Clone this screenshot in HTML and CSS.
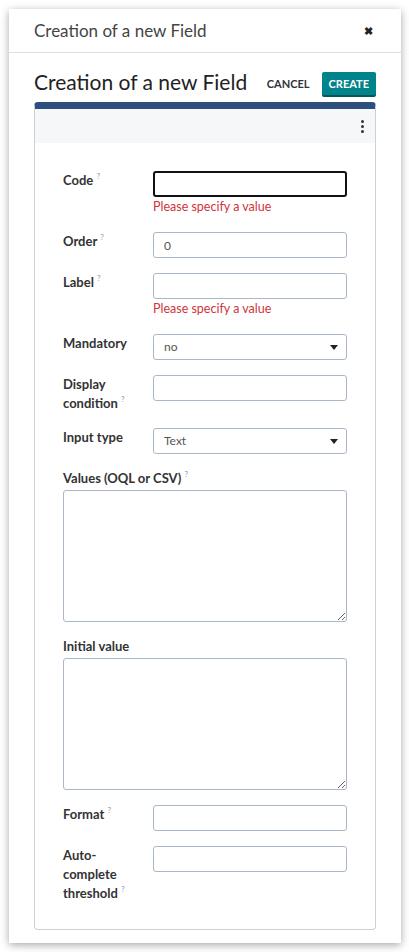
FILE: index.html
```html
<!DOCTYPE html>
<html lang="en">
<head>
  <meta charset="UTF-8">
  <title>Creation of a new Field</title>
  <meta name="viewport" content="width=device-width, initial-scale=1.0" />
  <link rel="stylesheet" href="styles.css">
</head>
<body>
  <div class="modal">
    <div class="modal-head">
      <span class="modal-title">Creation of a new Field</span>
      <span class="close">&#x2716;</span>
    </div>

    <div class="modal-body">
      <div class="toolbar">
        <h2>Creation of a new Field</h2>
        <button class="cancel">CANCEL</button>
        <button class="create">CREATE</button>
      </div>

      <div class="panel">
        <div class="panel-head">
          <span class="kebab"><i></i><i></i><i></i></span>
        </div>
        <div class="panel-body">
          <div class="row">
            <label>Code <sup>?</sup></label>
            <div class="field">
              <input type="text" class="focused">
              <div class="error">Please specify a value</div>
            </div>
          </div>
          <div class="row">
            <label>Order <sup>?</sup></label>
            <div class="field"><input type="text" value="0"></div>
          </div>
          <div class="row">
            <label>Label <sup>?</sup></label>
            <div class="field">
              <input type="text">
              <div class="error">Please specify a value</div>
            </div>
          </div>
          <div class="row">
            <label>Mandatory</label>
            <div class="field"><div class="select">no</div></div>
          </div>
          <div class="row">
            <label>Display condition <sup>?</sup></label>
            <div class="field"><input type="text"></div>
          </div>
          <div class="row">
            <label>Input type</label>
            <div class="field"><div class="select">Text</div></div>
          </div>
          <div class="block">
            <label>Values (OQL or CSV) <sup>?</sup></label>
            <textarea></textarea>
          </div>
          <div class="block">
            <label>Initial value</label>
            <textarea></textarea>
          </div>
          <div class="row">
            <label>Format <sup>?</sup></label>
            <div class="field"><input type="text"></div>
          </div>
          <div class="row">
            <label>Auto-complete threshold <sup>?</sup></label>
            <div class="field"><input type="text"></div>
          </div>
        </div>
      </div>
    </div>
  </div>
</body>
</html>
```

FILE: styles.css
```css
body { margin: 0; padding: 9px; background: #fff; font-family: Lato, "Open Sans", sans-serif; color: #2b2b2b; }
.modal { width: 392px; height: 934px; background: #fff; box-shadow: 0 2px 8px rgba(0,0,0,.35); box-sizing: border-box; }
.modal-head { height: 44px; border-bottom: 1px solid #dcdfe6; display: flex; align-items: center; justify-content: space-between; padding: 0 28px 0 25px; box-sizing: border-box; }
.modal-title { font-size: 17px; color: #444; }
.close { font-size: 11px; color: #222; font-weight: bold; }
.modal-body { padding: 0 25px; }
.toolbar { display: flex; align-items: center; height: 49px; padding-top: 8px; box-sizing: border-box; }
.toolbar h2 { margin: 0; font-size: 21px; font-weight: normal; color: #222; flex: 1; }
.toolbar button { font-family: inherit; font-size: 11px; font-weight: bold; border: none; cursor: pointer; margin-top: 4px; }
.cancel { background: none; color: #333; margin-right: 12px; padding: 0; }
.create { background: #00838a; color: #fff; height: 23px; padding: 0 7px; border-radius: 2px; box-shadow: 0 2px 0 #05565a; }
.panel { border: 1px solid #c9d1d9; border-top: 7px solid #2e4f7d; border-radius: 4px; height: 828px; box-sizing: border-box; }
.panel-head { height: 34px; background: #f6f7f9; display: flex; align-items: center; justify-content: flex-end; padding-right: 11px; }
.kebab { display: flex; flex-direction: column; gap: 2px; }
.kebab i { width: 3px; height: 3px; border-radius: 50%; background: #333; }
.panel-body { padding: 28px 28px 0 28px; display: flex; flex-direction: column; gap: 15px; }
.row { display: flex; }
.row label { width: 90px; flex: none; padding-right: 6px; box-sizing: border-box; font-size: 13px; font-weight: bold; color: #333; line-height: 19px; }
sup { font-size: 8px; color: #999; font-weight: normal; line-height: 0; vertical-align: baseline; position: relative; top: -6px; }
.field { flex: 1; }
input, .select { width: 100%; height: 26px; border: 1px solid #a9b8c8; border-radius: 3px; box-sizing: border-box; font-family: inherit; font-size: 12px; padding: 0 10px; color: #555; display: block; }
input.focused { border: 2px solid #111; }
.select { position: relative; line-height: 24px; }
.select::after { content: ""; position: absolute; right: 8px; top: 10px; border-left: 4px solid transparent; border-right: 4px solid transparent; border-top: 5px solid #222; }
.error { color: #d0343a; font-size: 12.5px; line-height: 20px; }
.block label { display: block; font-size: 13px; font-weight: bold; color: #333; line-height: 19px; margin-bottom: 2px; }
textarea { display: block; width: 100%; height: 132px; border: 1px solid #a9b8c8; border-radius: 3px; box-sizing: border-box; resize: vertical; }
```
